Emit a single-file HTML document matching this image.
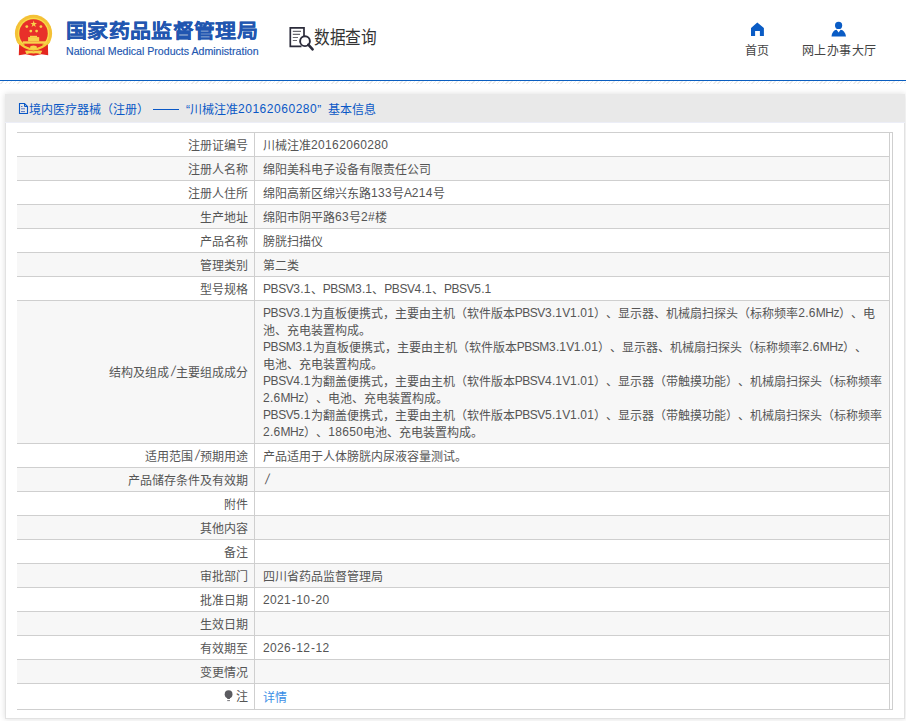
<!DOCTYPE html>
<html lang="zh-CN"><head><meta charset="utf-8">
<style>
*{margin:0;padding:0;box-sizing:border-box}
html,body{width:906px;height:721px;overflow:hidden;background:#fff}
body{font-family:"Liberation Sans",sans-serif;font-size:12px;color:#555;position:relative;text-spacing-trim:space-all}
i{font-style:normal}
i.d{letter-spacing:0.35px}
i.u{letter-spacing:-0.45px}
i.s{margin:0 1.7px;display:inline-block;transform:scaleY(1.22) skewX(-14deg);transform-origin:50% 70%}
.lr{position:relative;top:-1px}
.pt2 i.d{letter-spacing:0.52px}
i.h{margin:0 0.6px}
.abs{position:absolute}
#title{line-height:24px;left:66px;top:21px;font-size:21px;font-weight:700;color:#2156b0;white-space:nowrap;letter-spacing:0.35px;-webkit-text-stroke:0.25px #2156b0;transform:scaleY(0.9);transform-origin:0 0}
#sub{line-height:14px;left:66px;top:44px;font-size:10.6px;color:#2156b0;white-space:nowrap;-webkit-text-stroke:0.15px #2156b0}
#dq{line-height:22px;left:314px;top:27px;font-size:18px;color:#333;white-space:nowrap;transform:scaleX(0.87);transform-origin:0 0}
.nav{line-height:16px;color:#444;font-size:12px;white-space:nowrap;letter-spacing:0.4px}
#topline{left:0;top:80px;width:906px;height:1px;background:#0a5ec0}
#hatch{left:0;top:81px;width:906px;height:3px;background:repeating-linear-gradient(135deg,#fff 0,#fff 2px,#ebebeb 2px,#ebebeb 3px)}
#panel{left:5px;top:94px;width:900px;height:625px;background:#fff;border:1px solid #e2e2e2;box-shadow:0 0 6px rgba(0,0,0,0.14)}
#phead{left:5px;top:94px;width:900px;height:29px;background:#e9e9e9;border-bottom:1px solid #eceef7}
.pt{position:absolute;top:102px;color:#0a58c6;white-space:nowrap;line-height:16px}
.row{position:absolute;left:17px;width:872px;border-top:1px solid #cfcfcf}
.row.g{background:#f7f7f7}
.lab{position:absolute;left:0;width:231px;text-align:right;white-space:nowrap;color:#555;line-height:16px}
.val{position:absolute;left:246px;white-space:nowrap;color:#555;line-height:16px}
.ml{line-height:17px}
.lnk{color:#3a8ee6}
#vline{left:254px;top:132px;width:1px;height:578px;background:#cfcfcf}
#rline1{left:889px;top:132px;width:1px;height:578px;background:#cfcfcf}
#rline2{left:892px;top:132px;width:1px;height:578px;background:#cfcfcf}
#bline{left:17px;top:709px;width:876px;height:1px;background:#cfcfcf}
#tline{left:17px;top:132px;width:876px;height:1px;background:#cfcfcf}
</style></head><body>

<svg class="abs" style="left:10px;top:10px" width="50" height="50" viewBox="10 10 50 50">
  <defs><clipPath id="c1"><rect x="0" y="0" width="80" height="44.5"/></clipPath></defs>
  <path d="M19.3 41 L47.8 41 L48.2 55.3 L41.5 54.2 L33.5 55.8 L25.5 54.2 L18.8 55.3 Z" fill="#e3261f"/>
  <circle cx="33.5" cy="33.4" r="18.6" fill="#f4c136" clip-path="url(#c1)"/><circle cx="33.5" cy="33.4" r="15" fill="none" stroke="#f7dc4a" stroke-width="1.2" clip-path="url(#c1)"/>
  <circle cx="33.5" cy="33.4" r="14.2" fill="#e8302a"/>
  <path d="M17.5 41 Q33.5 58 49.5 41" fill="none" stroke="#f6cc3a" stroke-width="2.4"/>
  <rect x="30" y="35.8" width="7" height="1.5" fill="#f8d24c"/>
  <rect x="28.1" y="37.1" width="11.1" height="4.2" fill="#f8d24c"/>
  <rect x="22.8" y="41.3" width="23.9" height="2.4" fill="#f8d24c"/>
  <ellipse cx="33.5" cy="47.5" rx="3.4" ry="1.9" fill="#f8d24c"/>
  <path d="M25 50.8 Q29 50 33.5 51.2 Q38 50 42.3 50.8 L40.5 54.3 Q37 52.8 33.5 53.6 Q30 52.8 26.5 54.3 Z" fill="#f8d24c"/>
  <polygon points="33.7,20.6 34.5,23 37,23 35,24.5 35.8,27 33.7,25.5 31.6,27 32.4,24.5 30.4,23 32.9,23" fill="#f8d24c"/>
  <circle cx="26.8" cy="26.6" r="1.4" fill="#f8d24c"/>
  <circle cx="40.9" cy="26.6" r="1.4" fill="#f8d24c"/>
  <circle cx="30.8" cy="31.1" r="1.4" fill="#f8d24c"/>
  <circle cx="36.6" cy="31.1" r="1.4" fill="#f8d24c"/>
</svg>
<div id="title" class="abs">国家药品监督管理局</div>
<div id="sub" class="abs">National Medical Products Administration</div>
<svg class="abs" style="left:288px;top:26px" width="27" height="26" viewBox="0 0 27 26">
  <path d="M13.5 20.3 H2.3 V1.8 H16 V10.5" fill="none" stroke="#2b2b3a" stroke-width="1.7"/>
  <path d="M4.8 5.4 H13 M4.8 8.4 H12 M4.8 11.5 H10 M4.8 14.5 H9" stroke="#6a6a70" stroke-width="1.1"/>
  <circle cx="17" cy="15.2" r="4.9" fill="none" stroke="#2b2b3a" stroke-width="1.9"/>
  <path d="M20.3 18.6 L24.6 23.3" stroke="#2b2b3a" stroke-width="2.6" stroke-linecap="round"/>
</svg>
<div id="dq" class="abs">数据查询</div>
<svg class="abs" style="left:750px;top:22px" width="15" height="15" viewBox="0 0 15 15">
  <path d="M7.3 0.6 L13.9 6 V13.9 H9.9 V8.9 H5.1 V13.9 H1 V6 Z" fill="#0a5cc5"/>
</svg>
<div class="abs nav" style="left:745px;top:43px">首页</div>
<svg class="abs" style="left:830px;top:21px" width="17" height="16" viewBox="0 0 17 16">
  <circle cx="8.6" cy="4.4" r="3.6" fill="#0a5cc5"/>
  <path d="M1.5 15.5 Q2.3 9.3 6.6 8.8 L8.6 11.6 L10.6 8.8 Q14.9 9.3 16 15.5 Z" fill="#0a5cc5"/>
</svg>
<div class="abs nav" style="left:802px;top:43px">网上办事大厅</div>
<div id="topline" class="abs"></div>
<div id="hatch" class="abs"></div>


<div id="panel" class="abs"></div>
<div id="phead" class="abs"></div>
<svg class="abs" style="left:18px;top:102px" width="11" height="13" viewBox="0 0 11 13"><path d="M1.5 1.5 H6.5 L9.5 4.5 V11.5 H1.5 Z" fill="none" stroke="#0a58c6" stroke-width="1.1"/><path d="M6.5 2 V4.5 H9" fill="none" stroke="#0a58c6" stroke-width="1"/><path d="M3 4.5 H4.5 M3 6.8 H7 M3 9.6 H7" stroke="#5a78c8" stroke-width="1"/></svg>
<div class="pt" style="left:29px">境内医疗器械（注册）</div>
<div class="abs" style="left:152.5px;top:109px;width:26px;height:1px;background:#0a58c6"></div>
<div class="pt pt2" style="left:186px">“川械注准<span class="lr"><i class="d">2</i><i class="d">0</i><i class="d">1</i><i class="d">6</i><i class="d">2</i><i class="d">0</i><i class="d">6</i><i class="d">0</i><i class="d">2</i><i class="d">8</i><i class="d">0</i></span>”</div>
<div class="pt" style="left:327.5px">基本信息</div>

<svg class="abs" style="left:223px;top:688px" width="12" height="14" viewBox="0 0 12 14"><circle cx="5.6" cy="6.2" r="3.9" fill="#5b5b60"/><path d="M3.6 8.5 L4.4 11 H6.8 L7.6 8.5Z" fill="#5b5b60"/><rect x="4.2" y="12.2" width="2.8" height="0.9" fill="#6b6b70"/></svg><div id="rows">
<div class="row" style="top:132px;height:24px"><div class="lab" style="top:5px">注册证编号</div><div class="val" style="top:5px">川械注准<span class="lr"><i class="d">2</i><i class="d">0</i><i class="d">1</i><i class="d">6</i><i class="d">2</i><i class="d">0</i><i class="d">6</i><i class="d">0</i><i class="d">2</i><i class="d">8</i><i class="d">0</i></span></div></div>
<div class="row g" style="top:156px;height:24px"><div class="lab" style="top:5px">注册人名称</div><div class="val" style="top:5px">绵阳美科电子设备有限责任公司</div></div>
<div class="row" style="top:180px;height:24px"><div class="lab" style="top:5px">注册人住所</div><div class="val" style="top:5px">绵阳高新区绵兴东路<span class="lr"><i class="d">1</i><i class="d">3</i><i class="d">3</i></span>号<span class="lr"><i class="u">A</i><i class="d">2</i><i class="d">1</i><i class="d">4</i></span>号</div></div>
<div class="row g" style="top:204px;height:24px"><div class="lab" style="top:5px">生产地址</div><div class="val" style="top:5px">绵阳市阴平路<span class="lr"><i class="d">6</i><i class="d">3</i></span>号<span class="lr"><i class="d">2</i>#</span>楼</div></div>
<div class="row" style="top:228px;height:24px"><div class="lab" style="top:5px">产品名称</div><div class="val" style="top:5px">膀胱扫描仪</div></div>
<div class="row g" style="top:252px;height:24px"><div class="lab" style="top:5px">管理类别</div><div class="val" style="top:5px">第二类</div></div>
<div class="row" style="top:276px;height:24px"><div class="lab" style="top:5px">型号规格</div><div class="val" style="top:5px"><span class="lr"><i class="u">P</i><i class="u">B</i><i class="u">S</i><i class="u">V</i><i class="d">3</i>.<i class="d">1</i></span>、<span class="lr"><i class="u">P</i><i class="u">B</i><i class="u">S</i><i class="u">M</i><i class="d">3</i>.<i class="d">1</i></span>、<span class="lr"><i class="u">P</i><i class="u">B</i><i class="u">S</i><i class="u">V</i><i class="d">4</i>.<i class="d">1</i></span>、<span class="lr"><i class="u">P</i><i class="u">B</i><i class="u">S</i><i class="u">V</i><i class="d">5</i>.<i class="d">1</i></span></div></div>
<div class="row g" style="top:300px;height:143px"><div class="lab" style="top:64px">结构及组成<span class="lr"><i class="s">/</i></span>主要组成成分</div><div class="val ml" style="top:5px"><span class="lr"><i class="u">P</i><i class="u">B</i><i class="u">S</i><i class="u">V</i><i class="d">3</i>.<i class="d">1</i></span>为直板便携式，主要由主机（软件版本<span class="lr"><i class="u">P</i><i class="u">B</i><i class="u">S</i><i class="u">V</i><i class="d">3</i>.<i class="d">1</i><i class="u">V</i><i class="d">1</i>.<i class="d">0</i><i class="d">1</i></span>）、显示器、机械扇扫探头（标称频率<span class="lr"><i class="d">2</i>.<i class="d">6</i><i class="u">M</i><i class="u">H</i>z</span>）、电<br>池、充电装置构成。<br><span class="lr"><i class="u">P</i><i class="u">B</i><i class="u">S</i><i class="u">M</i><i class="d">3</i>.<i class="d">1</i></span>为直板便携式，主要由主机（软件版本<span class="lr"><i class="u">P</i><i class="u">B</i><i class="u">S</i><i class="u">M</i><i class="d">3</i>.<i class="d">1</i><i class="u">V</i><i class="d">1</i>.<i class="d">0</i><i class="d">1</i></span>）、显示器、机械扇扫探头（标称频率<span class="lr"><i class="d">2</i>.<i class="d">6</i><i class="u">M</i><i class="u">H</i>z</span>）、<br>电池、充电装置构成。<br><span class="lr"><i class="u">P</i><i class="u">B</i><i class="u">S</i><i class="u">V</i><i class="d">4</i>.<i class="d">1</i></span>为翻盖便携式，主要由主机（软件版本<span class="lr"><i class="u">P</i><i class="u">B</i><i class="u">S</i><i class="u">V</i><i class="d">4</i>.<i class="d">1</i><i class="u">V</i><i class="d">1</i>.<i class="d">0</i><i class="d">1</i></span>）、显示器（带触摸功能）、机械扇扫探头（标称频率<br><span class="lr"><i class="d">2</i>.<i class="d">6</i><i class="u">M</i><i class="u">H</i>z</span>）、电池、充电装置构成。<br><span class="lr"><i class="u">P</i><i class="u">B</i><i class="u">S</i><i class="u">V</i><i class="d">5</i>.<i class="d">1</i></span>为翻盖便携式，主要由主机（软件版本<span class="lr"><i class="u">P</i><i class="u">B</i><i class="u">S</i><i class="u">V</i><i class="d">5</i>.<i class="d">1</i><i class="u">V</i><i class="d">1</i>.<i class="d">0</i><i class="d">1</i></span>）、显示器（带触摸功能）、机械扇扫探头（标称频率<br><span class="lr"><i class="d">2</i>.<i class="d">6</i><i class="u">M</i><i class="u">H</i>z</span>）、<span class="lr"><i class="d">1</i><i class="d">8</i><i class="d">6</i><i class="d">5</i><i class="d">0</i></span>电池、充电装置构成。</div></div>
<div class="row" style="top:443px;height:24px"><div class="lab" style="top:5px">适用范围<span class="lr"><i class="s">/</i></span>预期用途</div><div class="val" style="top:5px">产品适用于人体膀胱内尿液容量测试。</div></div>
<div class="row g" style="top:467px;height:24px"><div class="lab" style="top:5px">产品储存条件及有效期</div><div class="val" style="top:5px"><span class="lr"><i class="s">/</i></span></div></div>
<div class="row" style="top:491px;height:24px"><div class="lab" style="top:5px">附件</div><div class="val" style="top:5px"></div></div>
<div class="row g" style="top:515px;height:24px"><div class="lab" style="top:5px">其他内容</div><div class="val" style="top:5px"></div></div>
<div class="row" style="top:539px;height:24px"><div class="lab" style="top:5px">备注</div><div class="val" style="top:5px"></div></div>
<div class="row g" style="top:563px;height:24px"><div class="lab" style="top:5px">审批部门</div><div class="val" style="top:5px">四川省药品监督管理局</div></div>
<div class="row" style="top:587px;height:24px"><div class="lab" style="top:5px">批准日期</div><div class="val" style="top:5px"><span class="lr"><i class="d">2</i><i class="d">0</i><i class="d">2</i><i class="d">1</i><i class="h">-</i><i class="d">1</i><i class="d">0</i><i class="h">-</i><i class="d">2</i><i class="d">0</i></span></div></div>
<div class="row g" style="top:611px;height:24px"><div class="lab" style="top:5px">生效日期</div><div class="val" style="top:5px"></div></div>
<div class="row" style="top:635px;height:24px"><div class="lab" style="top:5px">有效期至</div><div class="val" style="top:5px"><span class="lr"><i class="d">2</i><i class="d">0</i><i class="d">2</i><i class="d">6</i><i class="h">-</i><i class="d">1</i><i class="d">2</i><i class="h">-</i><i class="d">1</i><i class="d">2</i></span></div></div>
<div class="row g" style="top:659px;height:24px"><div class="lab" style="top:5px">变更情况</div><div class="val" style="top:5px"></div></div>
<div class="row" style="top:683px;height:27px"><div class="lab" style="top:5px">注</div><div class="val lnk" style="top:6px">详情</div></div>
</div>
<div id="vline" class="abs"></div><div id="rline1" class="abs"></div><div id="rline2" class="abs"></div><div id="tline" class="abs"></div><div id="bline" class="abs"></div>
</body></html>
